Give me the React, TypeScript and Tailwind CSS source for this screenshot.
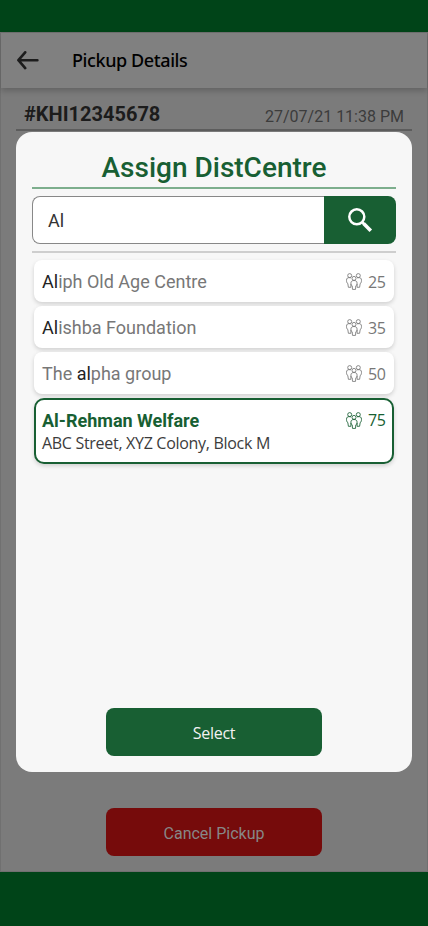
type Centre = {
  before: string;
  match: string;
  after: string;
  count: number;
};

const centres: Centre[] = [
  { before: '', match: 'Al', after: 'iph Old Age Centre', count: 25 },
  { before: '', match: 'Al', after: 'ishba Foundation', count: 35 },
  { before: 'The ', match: 'al', after: 'pha group', count: 50 },
];

function PeopleIcon() {
  return (
    <svg width="16" height="17" viewBox="0 0 16 17" fill="none" stroke="currentColor" strokeWidth="0.85" strokeLinejoin="round" className="mt-px shrink-0">
      <circle cx="3.7" cy="2.6" r="2" />
      <circle cx="12.3" cy="2.6" r="2" />
      <path d="M5 4.9C4 4.5 2.2 4.5 1.3 5.1C.3 5.9 .3 8.6 1 9.9L1.8 10.5L2.4 14.3H4.9V11" />
      <path d="M11 4.9C12 4.5 13.8 4.5 14.7 5.1C15.7 5.9 15.7 8.6 15 9.9L14.2 10.5L13.6 14.3H11.1V11" />
      <circle cx="8" cy="5.4" r="2" />
      <path d="M6 7.9C7 7.4 9 7.4 10 7.9C11.4 8.8 11.3 11 10.6 12.3L9.8 12.8L9.5 16.4H6.5L6.2 12.8L5.4 12.3C4.7 11 4.6 8.8 6 7.9Z" />
    </svg>
  );
}

function Count({ value }: { value: number }) {
  return (
    <div className="flex items-center gap-1.5">
      <PeopleIcon />
      <span className="w-[18px] pt-px font-['Open_Sans','Noto_Sans',sans-serif] text-base leading-5 tracking-[-0.5px]">{value}</span>
    </div>
  );
}

function CentreRow({ centre }: { centre: Centre }) {
  return (
    <li className="flex h-[42px] items-center justify-between rounded-lg bg-white pr-2 pl-2 text-[#777] shadow-[0_2px_4px_rgba(0,0,0,0.16)]">
      <span className="whitespace-pre pt-0.5 text-lg leading-[22px]">
        {centre.before}
        <span className="text-[#222]">{centre.match}</span>
        {centre.after}
      </span>
      <Count value={centre.count} />
    </li>
  );
}

function AssignDialog() {
  return (
    <section role="dialog" className="absolute top-[132px] left-4 flex h-[640px] w-[396px] flex-col rounded-2xl bg-[#f7f7f7] px-4 pb-4">
      <h2 className="h-[55px] pt-[19px] text-center text-[28px] leading-[33px] font-medium text-[#185f33]">Assign DistCentre</h2>
      <div className="h-0.5 bg-[#7dae8d]" />
      <div className="mt-[7px] flex h-12">
        <div className="flex w-[292px] items-center rounded-l-lg border border-r-0 border-[#888] bg-white pt-0.5 pl-[15px] text-lg text-[#333]">Al</div>
        <button className="flex w-[72px] items-center justify-center rounded-r-lg bg-[#185f33]" aria-label="Search">
          <svg width="26" height="26" viewBox="0 0 26 26" fill="none" stroke="white">
            <circle cx="9.8" cy="9.8" r="7.5" strokeWidth="2.5" />
            <path d="M15.2 15.2L17 17" strokeWidth="2.5" />
            <path d="M16.6 16.6L23.8 23.8" strokeWidth="3.6" />
          </svg>
        </button>
      </div>
      <div className="mt-[7px] h-0.5 bg-[#cecece]" />
      <ul className="mx-0.5 mt-[7px] flex flex-col gap-1">
        {centres.map((centre) => (
          <CentreRow key={centre.count} centre={centre} />
        ))}
        <li className="flex h-[66px] justify-between rounded-[10px] border-2 border-[#185f33] bg-white px-1.5 pt-[9px] text-[#185f33] shadow-[0_2px_4px_rgba(0,0,0,0.16)]">
          <div>
            <p className="text-lg leading-[23px] font-bold">Al-Rehman Welfare</p>
            <p className="font-['Open_Sans','Noto_Sans',sans-serif] text-base leading-[22px] tracking-[-0.3px] text-[#3c3c3c]">ABC Street, XYZ Colony, Block M</p>
          </div>
          <div className="h-5">
            <Count value={75} />
          </div>
        </li>
      </ul>
      <button className="mx-auto mt-auto h-12 w-[216px] rounded-lg bg-[#185f33] pt-0.5 font-['Open_Sans','Noto_Sans',sans-serif] text-base tracking-[-0.3px] text-[#f2f2f2]">Select</button>
    </section>
  );
}

export default function App() {
  return (
    <main className="relative flex h-[926px] w-[428px] flex-col overflow-hidden bg-[#004418] py-8 pb-[54px] font-[Roboto,sans-serif]">
      <div className="flex flex-1 flex-col border border-[#707070] bg-[#7b7b7b]">
        <header className="flex h-[55px] shrink-0 items-center bg-[#808080] pl-[15px] shadow-[0_3px_6px_rgba(0,0,0,0.2)]">
          <svg width="24" height="20" viewBox="0 0 24 20" fill="none" stroke="#1c1c1c" strokeWidth="2.6" strokeLinecap="round" strokeLinejoin="round">
            <path d="M21.4 9.2H2.4M9.2 1.3L2.4 9.2L9.2 17.1" />
          </svg>
          <h1 className="ml-8 pb-0.5 font-['Noto_Sans',sans-serif] text-lg font-medium tracking-[-0.4px] text-black">Pickup Details</h1>
        </header>
        <div className="mx-[15px] flex h-[43px] shrink-0 items-end justify-between border-b-2 border-[#5c5c5c] px-2 pb-0.5">
          <span className="pb-px text-xl leading-6 font-bold text-[#1c1c1c]">#KHI12345678</span>
          <span className="text-base leading-5 text-[#3c3c3c]">27/07/21 11:38 PM</span>
        </div>
        <button className="mx-auto mt-auto mb-[15px] h-12 w-[216px] rounded-lg bg-[#760b0b] pt-[3px] text-base text-[#878787]">Cancel Pickup</button>
      </div>
      <AssignDialog />
    </main>
  );
}
